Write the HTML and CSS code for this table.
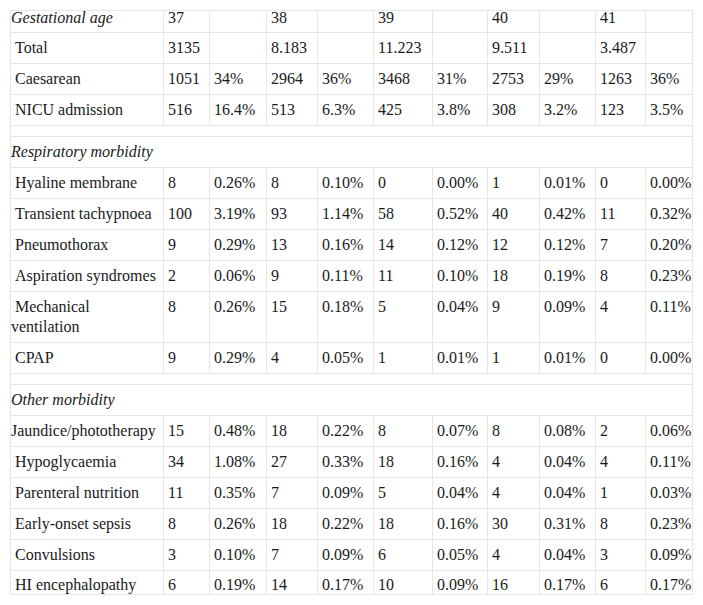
FILE: index.html
```html
<!DOCTYPE html>
<html lang="en">
<head>
<meta charset="utf-8">
<title>Neonatal morbidity by gestational age</title>
<link rel="stylesheet" href="styles.css">
</head>
<body>
<table class="data">
  <colgroup>
    <col class="c-label">
    <col class="c-n37"><col class="c-p37">
    <col class="c-n38"><col class="c-p38">
    <col class="c-n39"><col class="c-p39">
    <col class="c-n40"><col class="c-p40">
    <col class="c-n41"><col class="c-p41">
  </colgroup>
  <tbody>
    <tr class="cut-top"><td><em>Gestational age</em></td><td>37</td><td></td><td>38</td><td></td><td>39</td><td></td><td>40</td><td></td><td>41</td><td></td></tr>
    <tr><td>&nbsp;Total</td><td>3135</td><td></td><td>8.183</td><td></td><td>11.223</td><td></td><td>9.511</td><td></td><td>3.487</td><td></td></tr>
    <tr><td>&nbsp;Caesarean</td><td>1051</td><td>34%</td><td>2964</td><td>36%</td><td>3468</td><td>31%</td><td>2753</td><td>29%</td><td>1263</td><td>36%</td></tr>
    <tr><td>&nbsp;NICU admission</td><td>516</td><td>16.4%</td><td>513</td><td>6.3%</td><td>425</td><td>3.8%</td><td>308</td><td>3.2%</td><td>123</td><td>3.5%</td></tr>
    <tr class="spacer"><td colspan="11"></td></tr>
    <tr class="section"><td colspan="11"><em>Respiratory morbidity</em></td></tr>
    <tr><td>&nbsp;Hyaline membrane</td><td>8</td><td>0.26%</td><td>8</td><td>0.10%</td><td>0</td><td>0.00%</td><td>1</td><td>0.01%</td><td>0</td><td>0.00%</td></tr>
    <tr><td>&nbsp;Transient tachypnoea</td><td>100</td><td>3.19%</td><td>93</td><td>1.14%</td><td>58</td><td>0.52%</td><td>40</td><td>0.42%</td><td>11</td><td>0.32%</td></tr>
    <tr><td>&nbsp;Pneumothorax</td><td>9</td><td>0.29%</td><td>13</td><td>0.16%</td><td>14</td><td>0.12%</td><td>12</td><td>0.12%</td><td>7</td><td>0.20%</td></tr>
    <tr><td>&nbsp;Aspiration syndromes</td><td>2</td><td>0.06%</td><td>9</td><td>0.11%</td><td>11</td><td>0.10%</td><td>18</td><td>0.19%</td><td>8</td><td>0.23%</td></tr>
    <tr><td>&nbsp;Mechanical ventilation</td><td>8</td><td>0.26%</td><td>15</td><td>0.18%</td><td>5</td><td>0.04%</td><td>9</td><td>0.09%</td><td>4</td><td>0.11%</td></tr>
    <tr><td>&nbsp;CPAP</td><td>9</td><td>0.29%</td><td>4</td><td>0.05%</td><td>1</td><td>0.01%</td><td>1</td><td>0.01%</td><td>0</td><td>0.00%</td></tr>
    <tr class="spacer"><td colspan="11"></td></tr>
    <tr class="section"><td colspan="11"><em>Other morbidity</em></td></tr>
    <tr><td>Jaundice/phototherapy</td><td>15</td><td>0.48%</td><td>18</td><td>0.22%</td><td>8</td><td>0.07%</td><td>8</td><td>0.08%</td><td>2</td><td>0.06%</td></tr>
    <tr><td>&nbsp;Hypoglycaemia</td><td>34</td><td>1.08%</td><td>27</td><td>0.33%</td><td>18</td><td>0.16%</td><td>4</td><td>0.04%</td><td>4</td><td>0.11%</td></tr>
    <tr><td>&nbsp;Parenteral nutrition</td><td>11</td><td>0.35%</td><td>7</td><td>0.09%</td><td>5</td><td>0.04%</td><td>4</td><td>0.04%</td><td>1</td><td>0.03%</td></tr>
    <tr><td>&nbsp;Early-onset sepsis</td><td>8</td><td>0.26%</td><td>18</td><td>0.22%</td><td>18</td><td>0.16%</td><td>30</td><td>0.31%</td><td>8</td><td>0.23%</td></tr>
    <tr><td>&nbsp;Convulsions</td><td>3</td><td>0.10%</td><td>7</td><td>0.09%</td><td>6</td><td>0.05%</td><td>4</td><td>0.04%</td><td>3</td><td>0.09%</td></tr>
    <tr class="cut-bottom"><td>&nbsp;HI encephalopathy</td><td>6</td><td>0.19%</td><td>14</td><td>0.17%</td><td>10</td><td>0.09%</td><td>16</td><td>0.17%</td><td>6</td><td>0.17%</td></tr>
  </tbody>
</table>
</body>
</html>
```

FILE: styles.css
```css
html, body {
  margin: 0;
  padding: 0;
  background: #ffffff;
}

body {
  padding: 10px 0 0 10px;
  font-family: "Liberation Serif", "Times New Roman", serif;
  font-size: 16px;
  line-height: 20px;
  color: #1a1a1a;
}

.data {
  border-collapse: collapse;
  table-layout: fixed;
  width: 683px;
}

.data td {
  border: 1px solid #e6e6e6;
  padding: 5px 0 5px 4px;
  vertical-align: top;
  white-space: nowrap;
}

.data td:first-child {
  padding-left: 0;
  padding-right: 5px;
  white-space: normal;
}

.data em {
  font-style: italic;
}

.c-label { width: 153px; }
.c-n37 { width: 46px; }
.c-p37 { width: 57px; }
.c-n38 { width: 51px; }
.c-p38 { width: 56px; }
.c-n39 { width: 59px; }
.c-p39 { width: 55px; }
.c-n40 { width: 52px; }
.c-p40 { width: 56px; }
.c-n41 { width: 50px; }
.c-p41 { width: 47px; }

.cut-top td {
  padding-top: 0;
  padding-bottom: 7px;
  line-height: 14px;
}

.cut-bottom td {
  padding-bottom: 0;
  line-height: 18px;
}

.spacer td {
  padding: 5px 0;
  height: 0;
}

.section td {
  padding-left: 0;
}
```
